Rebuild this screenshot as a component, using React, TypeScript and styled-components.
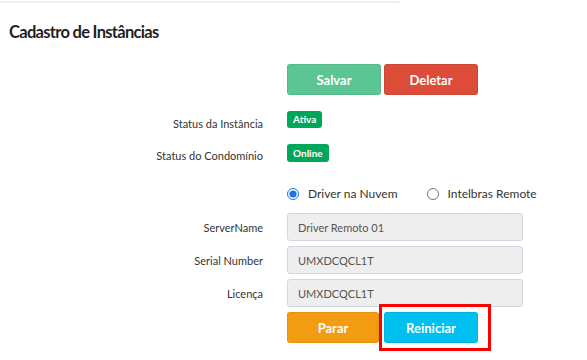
import React from "react";
import styled, { createGlobalStyle } from "styled-components";

const Global = createGlobalStyle`
  body { margin: 0; background: #fff; font-family: "Lato", "Liberation Sans", sans-serif; color: #333; }
  * { box-sizing: border-box; }
`;

const Page = styled.div`
  position: relative;
  width: 587px;
  height: 360px;
  overflow: hidden;
`;

const TopStrip = styled.div`
  width: 400px;
  height: 3px;
  border-bottom: 2px solid #f0f0f0;
  border-right: 1px solid #f0f0f0;
`;

const Title = styled.h3`
  margin: 18px 0 0 9px;
  font-size: 16.5px;
  letter-spacing: -0.7px;
  line-height: 22px;
  font-weight: 700;
  color: #1f1f1f;
`;

const Form = styled.div`
  display: flex;
  flex-direction: column;
  margin-top: 21px;
`;

const Row = styled.div<{ $mt?: number; $align?: string; $h?: number }>`
  display: flex;
  align-items: ${(p) => p.$align || "center"};
  margin-top: ${(p) => p.$mt ?? 0}px;
  ${(p) => (p.$h ? `height: ${p.$h}px;` : "")}
`;

const Label = styled.div<{ $pt?: number }>`
  width: 263px;
  text-align: right;
  font-size: 11px;
  line-height: 15px;
  color: #333;
  padding-top: ${(p) => p.$pt ?? 0}px;
`;

const Control = styled.div`
  margin-left: 24px;
  display: flex;
  align-items: center;
`;

const Btn = styled.button<{ $bg: string; $w: number; $ml?: number }>`
  width: ${(p) => p.$w}px;
  height: 31px;
  margin-left: ${(p) => p.$ml ?? 0}px;
  border: 1px solid rgba(0, 0, 0, 0.06);
  border-radius: 3px;
  background: ${(p) => p.$bg};
  color: #fff;
  font-family: inherit;
  font-weight: 700;
  font-size: 13px;
  padding: 0;
  cursor: pointer;
`;

const Badge = styled.span<{ $h: number }>`
  display: inline-block;
  height: ${(p) => p.$h}px;
  padding: 0 6px;
  border-radius: 3px;
  background: #00a65a;
  color: #fff;
  font-weight: 700;
  font-size: 10px;
  line-height: ${(p) => p.$h}px;
`;

const RadioLabel = styled.label<{ $ml?: number }>`
  display: flex;
  align-items: center;
  margin-left: ${(p) => p.$ml ?? 0}px;
  font-size: 12px;
  line-height: 16px;
  color: #333;
`;

const Radio = styled.input`
  width: 12px;
  height: 12px;
  margin: 0 9px 0 0;
  accent-color: #1a73e8;
`;

const Input = styled.input`
  width: 236px;
  height: 28px;
  background: #eeeeee;
  border: 1px solid #d2d6de;
  border-radius: 3px;
  padding: 0 10px;
  font-family: inherit;
  font-size: 11px;
  color: #555;
  outline: none;
`;

const Highlight = styled.div`
  position: absolute;
  left: 379px;
  top: 304px;
  width: 112px;
  height: 47px;
  border: 3px solid #ff0000;
  pointer-events: none;
`;

export default function App() {
  return (
    <Page>
      <Global />
      <TopStrip />
      <Title>Cadastro de Instâncias</Title>
      <Form>
        <Row>
          <Label />
          <Control>
            <Btn $bg="#5cc594" $w={94}>Salvar</Btn>
            <Btn $bg="#dd4b39" $w={94} $ml={3}>Deletar</Btn>
          </Control>
        </Row>
        <Row $mt={16} $align="flex-start" $h={20}>
          <Label $pt={5}>Status da Instância</Label>
          <Control>
            <Badge $h={17}>Ativa</Badge>
          </Control>
        </Row>
        <Row $mt={13} $align="flex-start" $h={19}>
          <Label $pt={4}>Status do Condomínio</Label>
          <Control>
            <Badge $h={18}>Online</Badge>
          </Control>
        </Row>
        <Row $mt={23} $h={16}>
          <Label />
          <Control>
            <RadioLabel>
              <Radio type="radio" name="drv" defaultChecked />
              Driver na Nuvem
            </RadioLabel>
            <RadioLabel $ml={29}>
              <Radio type="radio" name="drv" />
              Intelbras Remote
            </RadioLabel>
          </Control>
        </Row>
        <Row $mt={11}>
          <Label>ServerName</Label>
          <Control>
            <Input readOnly value="Driver Remoto 01" />
          </Control>
        </Row>
        <Row $mt={5}>
          <Label>Serial Number</Label>
          <Control>
            <Input readOnly value="UMXDCQCL1T" />
          </Control>
        </Row>
        <Row $mt={5}>
          <Label>Licença</Label>
          <Control>
            <Input readOnly value="UMXDCQCL1T" />
          </Control>
        </Row>
        <Row $mt={5}>
          <Label />
          <Control>
            <Btn $bg="#f39c12" $w={92}>Parar</Btn>
            <Btn $bg="#00c0ef" $w={94} $ml={5}>Reiniciar</Btn>
          </Control>
        </Row>
      </Form>
      <Highlight />
    </Page>
  );
}
